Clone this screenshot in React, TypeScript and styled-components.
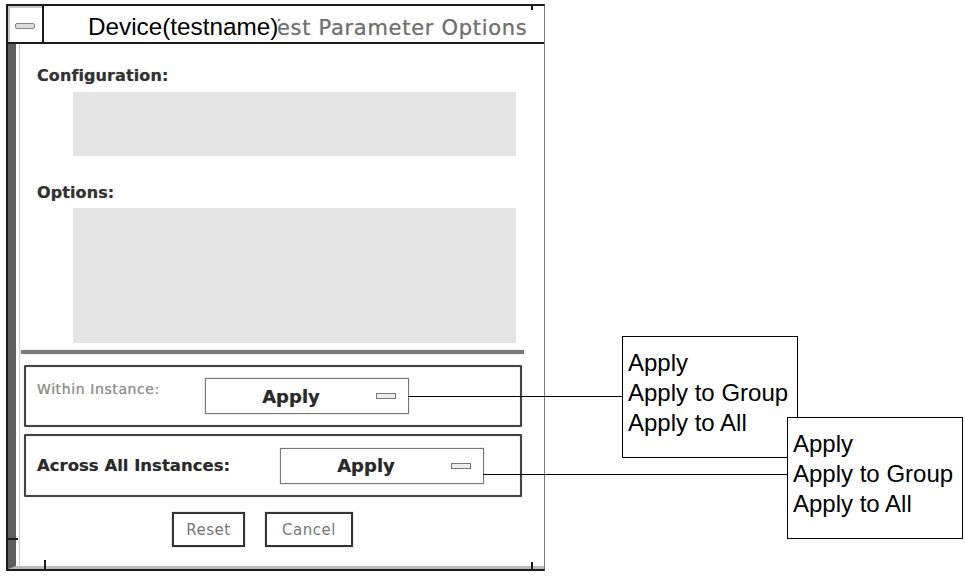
import styled, { createGlobalStyle } from "styled-components";

const GlobalStyle = createGlobalStyle`
  html, body {
    margin: 0;
    padding: 0;
    background: #fff;
  }
  body {
    font-family: "DejaVu Sans", "Liberation Sans", sans-serif;
  }
`;

const Page = styled.div`
  position: relative;
  width: 965px;
  height: 577px;
  overflow: hidden;
  background: #fff;
`;

const Window = styled.div`
  position: relative;
  margin: 4px 0 0 6px;
  width: 539px;
  height: 567px;
  box-sizing: border-box;
  border: 2px solid #1b1b1b;
  border-right: 1px solid #777;
  display: flex;
  flex-direction: column;
  background: #fff;
`;

const TitleBar = styled.div`
  display: flex;
  height: 36px;
  flex-shrink: 0;
  border-bottom: 2px solid #1b1b1b;
`;

const MenuButton = styled.div`
  width: 34px;
  display: flex;
  align-items: center;
  justify-content: center;
  border-right: 2px solid #1b1b1b;
  box-shadow: inset 5px 5px 0 -3px #c8c8c8;
`;

const MenuBar = styled.div`
  width: 18px;
  height: 4px;
  border: 1px solid #888;
  border-radius: 2px;
  background: #ddd;
  margin-top: 4px;
`;

const TitleArea = styled.div`
  position: relative;
  flex: 1;
  display: flex;
  align-items: center;
  padding-left: 223px;
  padding-top: 8px;
  overflow: hidden;
`;

const TitleText = styled.span`
  font-family: "DejaVu Sans", sans-serif;
  font-size: 21px;
  letter-spacing: 0.7px;
  color: #707070;
  text-shadow: 0 0 1px #aaa;
  white-space: nowrap;
`;

const TitlePatch = styled.span`
  position: absolute;
  left: 40px;
  top: 7px;
  padding: 0 0 0 4px;
  background: #fff;
  font-family: "Liberation Sans", Arial, sans-serif;
  font-size: 24.3px;
  line-height: 28px;
  color: #000;
`;

const Body = styled.div`
  flex: 1;
  display: flex;
  flex-direction: column;
  border-left: 8px solid #5e5e5e;
  box-shadow: inset 3px 0 0 #fff, inset 4px 0 0 #ccc;
  border-bottom: 3px solid #bbb;
`;

const Section = styled.div`
  display: flex;
  flex-direction: column;
  padding-left: 21px;
`;

const SectionLabel = styled.div<{ $top: number }>`
  font-family: "DejaVu Sans", sans-serif;
  font-weight: bold;
  font-size: 16px;
  letter-spacing: 0.1px;
  color: #333;
  text-shadow: 0 0 1px #999;
  height: 20px;
  margin-top: ${(p) => p.$top}px;
`;

const ListBox = styled.div<{ $height: number; $gap: number }>`
  margin: ${(p) => p.$gap}px 0 0 36px;
  width: 443px;
  height: ${(p) => p.$height}px;
  background: #e4e4e4;
`;

const Separator = styled.div`
  margin: 7px 0 0 5px;
  width: 503px;
  height: 4px;
  background: #777;
  box-shadow: 0 0 1px #999;
`;

const Frame = styled.div<{ $height: number; $top: number }>`
  margin: ${(p) => p.$top}px 0 0 8px;
  width: 498px;
  height: ${(p) => p.$height}px;
  box-sizing: border-box;
  border: 2px solid #444;
  border-radius: 1px;
  box-shadow: 0 0 1px #888, inset 0 0 1px #888;
  display: flex;
  align-items: center;
  padding-left: 11px;
`;

const FrameLabel = styled.div<{ $strong?: boolean; $width: number }>`
  width: ${(p) => p.$width}px;
  font-family: "DejaVu Sans", sans-serif;
  font-size: ${(p) => (p.$strong ? 16.5 : 14)}px;
  font-weight: ${(p) => (p.$strong ? "bold" : "normal")};
  letter-spacing: ${(p) => (p.$strong ? 0 : 0.6)}px;
  color: ${(p) => (p.$strong ? "#2a2a2a" : "#8e8e8e")};
  text-shadow: 0 0 1px #aaa;
  align-self: ${(p) => (p.$strong ? "center" : "flex-start")};
  margin-top: ${(p) => (p.$strong ? 0 : 14)}px;
`;

const OptionMenu = styled.div`
  width: 204px;
  height: 36px;
  box-sizing: border-box;
  border: 1px solid #777;
  box-shadow: 0 0 1px #999;
  display: flex;
  align-items: center;
  padding: 0 12px 0 0;
`;

const OptionValue = styled.span`
  flex: 1;
  text-align: center;
  font-family: "DejaVu Sans", sans-serif;
  font-weight: bold;
  font-size: 18px;
  color: #2a2a2a;
  text-shadow: 0 0 1px #999;
`;

const OptionIndicator = styled.span`
  width: 18px;
  height: 4px;
  border: 1px solid #777;
  background: #eee;
`;

const ButtonRow = styled.div`
  display: flex;
  gap: 20px;
  margin: 15px 0 0 156px;
`;

const PushButton = styled.div<{ $width: number }>`
  width: ${(p) => p.$width}px;
  height: 35px;
  box-sizing: border-box;
  border: 2px solid #333;
  box-shadow: 0 0 1px #888;
  display: flex;
  align-items: center;
  justify-content: center;
  font-family: "DejaVu Sans", sans-serif;
  font-size: 15px;
  letter-spacing: 0.5px;
  color: #777;
`;

const Tick = styled.span<{ $x: number; $y: number; $w: number; $h: number }>`
  position: absolute;
  left: ${(p) => p.$x}px;
  top: ${(p) => p.$y}px;
  width: ${(p) => p.$w}px;
  height: ${(p) => p.$h}px;
  background: #1b1b1b;
`;

const Callout = styled.div<{ $x: number; $y: number }>`
  position: absolute;
  left: ${(p) => p.$x}px;
  top: ${(p) => p.$y}px;
  width: 176px;
  height: 122px;
  box-sizing: border-box;
  border: 1px solid #000;
  background: #fff;
  padding: 11px 0 0 5px;
  display: flex;
  flex-direction: column;
`;

const CalloutItem = styled.div`
  font-family: "Liberation Sans", Arial, sans-serif;
  font-size: 24px;
  line-height: 30px;
  color: #000;
  white-space: nowrap;
`;

const Leader = styled.div<{ $x: number; $y: number; $w: number }>`
  position: absolute;
  left: ${(p) => p.$x}px;
  top: ${(p) => p.$y}px;
  width: ${(p) => p.$w}px;
  height: 1px;
  background: #000;
`;

const choices = ["Apply", "Apply to Group", "Apply to All"];

export default function App() {
  return (
    <>
      <GlobalStyle />
      <Page>
        <Window>
          <TitleBar>
            <MenuButton>
              <MenuBar />
            </MenuButton>
            <TitleArea>
              <TitleText>Test Parameter Options</TitleText>
              <TitlePatch>Device(testname)</TitlePatch>
            </TitleArea>
          </TitleBar>
          <Body>
            <Section>
              <SectionLabel $top={22}>Configuration:</SectionLabel>
              <ListBox $height={64} $gap={6} />
              <SectionLabel $top={27}>Options:</SectionLabel>
              <ListBox $height={135} $gap={5} />
            </Section>
            <Separator />
            <Frame $top={11} $height={62}>
              <FrameLabel $width={168}>Within Instance:</FrameLabel>
              <OptionMenu>
                <OptionValue>Apply</OptionValue>
                <OptionIndicator />
              </OptionMenu>
            </Frame>
            <Frame $top={7} $height={63}>
              <FrameLabel $strong $width={243}>
                Across All Instances:
              </FrameLabel>
              <OptionMenu>
                <OptionValue>Apply</OptionValue>
                <OptionIndicator />
              </OptionMenu>
            </Frame>
            <ButtonRow>
              <PushButton $width={73}>Reset</PushButton>
              <PushButton $width={88}>Cancel</PushButton>
            </ButtonRow>
          </Body>
          <Tick $x={-2} $y={532} $w={12} $h={2} />
          <Tick $x={36} $y={554} $w={2} $h={10} />
          <Tick $x={523} $y={-2} $w={2} $h={6} />
          <Tick $x={523} $y={556} $w={2} $h={8} />
        </Window>
        <Leader $x={408} $y={396} $w={214} />
        <Leader $x={483} $y={474} $w={304} />
        <Callout $x={622} $y={336}>
          {choices.map((c) => (
            <CalloutItem key={c}>{c}</CalloutItem>
          ))}
        </Callout>
        <Callout $x={787} $y={417}>
          {choices.map((c) => (
            <CalloutItem key={c}>{c}</CalloutItem>
          ))}
        </Callout>
      </Page>
    </>
  );
}
